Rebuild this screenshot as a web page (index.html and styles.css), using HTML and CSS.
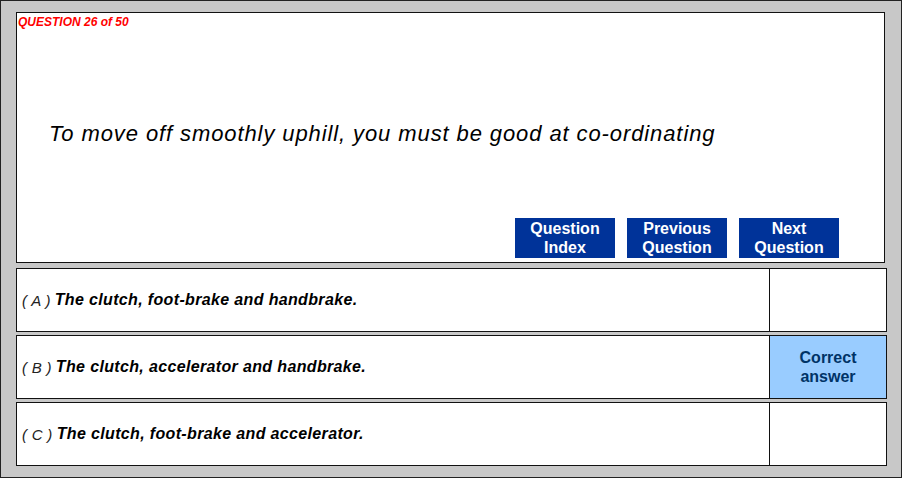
FILE: index.html
```html
<!DOCTYPE html>
<html lang="en">
<head>
    <meta charset="UTF-8">
    <title>Question 26 of 50</title>
    <link rel="stylesheet" href="styles.css">
</head>
<body>

    <div class="frame">

        <!-- Question panel -->
        <div class="question-box">
            <div class="counter">QUESTION 26 of 50</div>
            <p class="question-text">To move off smoothly uphill, you must be good at co-ordinating</p>
            <div class="nav-buttons">
                <button class="nav-btn">Question<br>Index</button>
                <button class="nav-btn">Previous<br>Question</button>
                <button class="nav-btn">Next<br>Question</button>
            </div>
        </div>

        <!-- Answer rows -->
        <div class="answers">
            <div class="answer-row">
                <div class="answer-text"><span class="letter">( A )</span> The clutch, foot-brake and handbrake.</div>
                <div class="answer-mark"></div>
            </div>
            <div class="answer-row">
                <div class="answer-text"><span class="letter">( B )</span> The clutch, accelerator and handbrake.</div>
                <div class="answer-mark correct">Correct<br>answer</div>
            </div>
            <div class="answer-row">
                <div class="answer-text"><span class="letter">( C )</span> The clutch, foot-brake and accelerator.</div>
                <div class="answer-mark"></div>
            </div>
        </div>

    </div>

</body>
</html>
```

FILE: styles.css
```css
/* General body styles */
body {
    margin: 0;
    font-family: 'Liberation Sans', Arial, sans-serif;
    color: #000;
}

/* Outer grey frame */
.frame {
    width: 902px;
    height: 478px;
    border: 1px solid #222;
    background-color: #c8c8c8;
    padding: 11px 0 0 15px;
    box-sizing: border-box;
}

/* Question panel */
.question-box {
    width: 869px;
    height: 251px;
    box-sizing: border-box;
    border: 1px solid #111;
    background-color: #fff;
    display: flex;
    flex-direction: column;
}

.counter {
    color: #ff0000;
    font-size: 12px;
    font-weight: bold;
    font-style: italic;
    padding: 3px 0 0 1px;
    line-height: 13px;
}

.question-text {
    font-size: 22px;
    font-style: italic;
    letter-spacing: 0.9px;
    margin: 93px 0 0 32px;
    line-height: 24px;
}

.nav-buttons {
    display: flex;
    gap: 12px;
    margin: 72px 0 0 498px;
}

.nav-btn {
    width: 100px;
    height: 40px;
    border: none;
    background-color: #003399;
    color: #fff;
    font-family: 'Liberation Sans', Arial, sans-serif;
    font-size: 16px;
    font-weight: bold;
    line-height: 19px;
    padding: 0;
    cursor: pointer;
}

/* Answer rows */
.answers {
    display: flex;
    flex-direction: column;
    gap: 3px;
    margin-top: 5px;
    width: 871px;
}

.answer-row {
    display: flex;
    height: 64px;
    box-sizing: border-box;
    border: 1px solid #111;
    background-color: #fff;
}

.answer-text {
    flex: 1;
    display: flex;
    align-items: center;
    gap: 4px;
    padding-left: 5px;
    font-size: 16px;
    letter-spacing: 0.35px;
    font-weight: bold;
    font-style: italic;
}

.letter {
    font-weight: normal;
    font-size: 15px;
    letter-spacing: 0.3px;
    color: #222;
}

.answer-mark {
    width: 116px;
    border-left: 1px solid #111;
    display: flex;
    align-items: center;
    justify-content: center;
    text-align: center;
    font-size: 16px;
    font-weight: bold;
    line-height: 19px;
}

.answer-mark.correct {
    background-color: #99ccff;
    color: #003366;
}
```
